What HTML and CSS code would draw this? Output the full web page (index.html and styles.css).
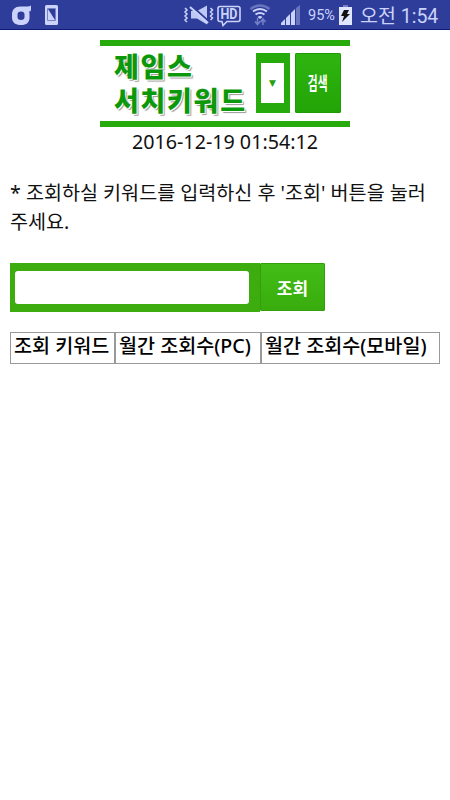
FILE: index.html
```
<!DOCTYPE html>
<html lang="ko">
<head>
  <meta charset="UTF-8" />
  <meta name="viewport" content="width=device-width, initial-scale=1.0"/>
  <title>제임스 서치키워드</title>
  <link rel="stylesheet" href="styles.css">
</head>
<body>

  <div class="status-bar">
    <svg class="status-icons" width="308" height="30" viewBox="0 0 308 30">
      <!-- carrier -->
      <path fill="#cbd3fa" fill-rule="evenodd" d="M31 5.500v4.500q0 1.500-2 1.500.500 1 .500 3v3c0 5-3 7.500-8.500 7.500s-9-2.500-9-7.500v-3c0-5 3-8 8.500-8h7q2 0 3.500-1zM21 11.500q-3.500 0-3.500 3v2.500q0 3 3.500 3t3.500-3v-2.500q0-3-3.500-3z"/>
      <rect x="45" y="5" width="13" height="20" rx="1.500" fill="#cbd3fa"/>
      <path fill="#2f3d9a" d="M48 9h7v11z"/>
      <path fill="none" stroke="#7682c3" d="M47.500 8.500h8v12h-8z"/>
      <!-- mute -->
      <path fill="#bfc9f5" d="M191 11h6l10-5.500v19l-10-6h-6z"/>
      <path stroke="#2f3d9a" stroke-width="2" d="M191 5.500l18 16"/>
      <path stroke="#cbd3fa" stroke-width="2" d="M190 7l18 16"/>
      <path fill="none" stroke="#cbd3fa" stroke-width="1.500" d="M185 8l2 2-2 2 2 2-2 2 2 2-2 2 2 2M210.500 8l2 2-2 2 2 2-2 2 2 2-2 2"/>
      <!-- HD call -->
      <path fill="none" stroke="#cbd3fa" stroke-width="1.600" d="M220 6.500h18q2 0 2 2v11q0 2-2 2h-11l-4 4-1-4h-2q-2 0-2-2v-11q0-2 2-2z"/>
      <text class="hd" x="220.500" y="19" textLength="17" lengthAdjust="spacingAndGlyphs">HD</text>
      <!-- wifi -->
      <path fill="none" stroke="#6874bd" stroke-width="2.500" d="M250.500 9q9.500-7 19 0"/>
      <path fill="none" stroke="#cbd3fa" stroke-width="2" d="M253 11.500q7-5 14 0M255.500 14.500q4.500-3 9 0"/>
      <path fill="#cbd3fa" d="M257.500 17q2.500-2 5 0l-2.500 2z"/>
      <path fill="none" stroke="#7480c8" stroke-width="1.500" d="M257.500 18v6.500m-2.500-3l2.500 3 2.500-3M263 25v-6m-2.500 3l2.500-3 2.500 3"/>
      <!-- signal -->
      <path fill="#cbd3fa" d="M281 25v-2l4-4v6zM286 25v-7l4-4v11zM291 25v-12l4-4v16z"/>
      <path fill="#6975bd" d="M296 25V8l4-3v20z"/>
    </svg>
    <span class="percent">95%</span>
    <svg class="battery" width="13" height="20" viewBox="0 0 13 20">
      <path fill="#7480c8" d="M4 0h5v3H4z"/>
      <path fill="#e0e6ff" d="M0 2h13v18H0z"/>
      <path fill="#111" d="M5 5h5l-2 4h3l-8 8 2-6H2z"/>
    </svg>
    <span class="clock">오전 1:54</span>
  </div>

  <div class="banner">
    <h1>제임스<br>서치키워드</h1>
    <div class="select-box"><span>▼</span></div>
    <button class="banner-btn"><span>검색</span></button>
  </div>

  <div class="date">2016-12-19 01:54:12</div>

  <p class="guide">* 조회하실 키워드를 입력하신 후 '조회' 버튼을 눌러주세요.</p>

  <form class="search">
    <div class="search-box"><input type="text" id="keyword" /></div>
    <button type="button" class="search-btn">조회</button>
  </form>

  <table>
    <tr>
      <th class="keyword">조회 키워드</th>
      <th class="pc">월간 조회수(PC)</th>
      <th>월간 조회수(모바일)</th>
    </tr>
  </table>

</body>
</html>
```

FILE: styles.css
```
* {
  box-sizing: border-box;
}

body {
  margin: 0;
  background-color: #fff;
  color: #111;
  font-family: 'Noto Sans', 'Noto Sans CJK KR', sans-serif;
}

button {
  border: none;
  padding: 0;
  font-family: inherit;
  color: #fff;
}

.status-bar {
  display: flex;
  height: 30px;
  background-color: #2f3d9a;
  border-bottom: 1px solid #101a78;
  color: #cbd3fa;
  font-family: Roboto, 'Noto Sans CJK KR', sans-serif;
  white-space: nowrap;
}

.status-icons {
  flex: none;
}

.hd {
  font: bold 14px Roboto, sans-serif;
  fill: #cbd3fa;
}

.percent {
  width: 31px;
  font-size: 14.5px;
  line-height: 31px;
}

.battery {
  margin-top: 5px;
}

.clock {
  margin-left: 8px;
  font-size: 19.5px;
  line-height: 33px;
}

.banner {
  display: flex;
  width: 250px;
  height: 87px;
  margin: 10px auto 0;
  padding-top: 7px;
  border-top: 6px solid #27aa0b;
  border-bottom: 6px solid #27aa0b;
}

h1 {
  width: 156px;
  margin: -3px 0 0;
  padding-left: 14px;
  color: #0b980b;
  font-size: 27px;
  font-weight: 900;
  line-height: 34px;
  letter-spacing: 1.7px;
  white-space: nowrap;
  text-shadow: 1px 1px 0 #fff, 2px 2px 1px #999;
}

.select-box {
  display: flex;
  align-items: center;
  justify-content: center;
  width: 34px;
  height: 60px;
  border: solid #27aa0b;
  border-width: 10px 6px 10px 5px;
  background-color: #fff;
  color: #27a00b;
  font: 9px 'DejaVu Sans', sans-serif;
}

.banner-btn {
  width: 46px;
  height: 60px;
  margin-left: 5px;
  border-radius: 2px;
  background: linear-gradient(#2fb510, #22a406);
  box-shadow: inset 0 0 0 1px #209b08;
  font-size: 16px;
  font-weight: 700;
}

.banner-btn span {
  display: inline-block;
  margin: -4px -8px 0;
  transform: scaleX(0.67) scaleY(1.15);
}

.date {
  height: 30px;
  font-size: 19.7px;
  line-height: 30px;
  text-align: center;
}

.guide {
  margin: 21px 10px 0;
  font-size: 19.6px;
  line-height: 29px;
  word-break: break-all;
}

.search {
  display: flex;
  margin: 26px 10px 0;
  padding-top: 1px;
}

.search-box {
  width: 250px;
  height: 49px;
  padding: 8px 11px 8px 5px;
  background-color: #3cac0e;
}

input {
  display: block;
  width: 100%;
  height: 33px;
  border: none;
  border-radius: 3px;
  background-color: #fff;
}

.search-btn {
  width: 65px;
  height: 48px;
  border-radius: 2px;
  background: linear-gradient(#43bd17, #38ac0d);
  box-shadow: inset 0 0 0 1px #329f0b;
  font-size: 17px;
  font-weight: 700;
}

table {
  width: 430px;
  height: 32px;
  margin: 20px 10px 0;
  border: 1px solid #999;
  border-spacing: 0;
  table-layout: fixed;
}

th {
  padding: 0 0 5px 3px;
  color: #000;
  font-size: 19.6px;
  font-weight: 500;
  line-height: 25px;
  text-align: left;
  white-space: nowrap;
}

th + th {
  border-left: 2px solid #999;
}

.keyword {
  width: 103px;
}

.pc {
  width: 146px;
}
```
